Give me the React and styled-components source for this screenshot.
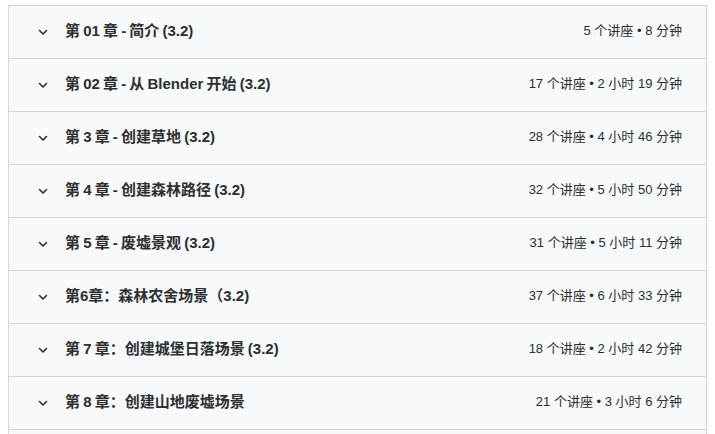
import React from 'react';
import styled, { createGlobalStyle } from 'styled-components';

const GlobalStyle = createGlobalStyle`
  body {
    margin: 0;
    padding: 5px 8px 0 8px;
    background: #ffffff;
    font-family: "Liberation Sans", "Noto Sans CJK SC", sans-serif;
    color: #2d2f31;
    overflow: hidden;
  }
`;

const Curriculum = styled.div`
  display: flex;
  flex-direction: column;
  border: 1px solid #d1d7dc;
  border-bottom: none;
  padding-bottom: 10px;
  background: #f7f9fa;
`;

const Section = styled.div`
  display: flex;
  align-items: center;
  height: 52px;
  padding: 0 24px 0 26px;
  background: #f7f9fa;
  border-bottom: 1px solid #d1d7dc;
`;

const Chevron = styled.span`
  display: flex;
  align-items: center;
  justify-content: center;
  width: 16px;
  height: 16px;
  margin-right: 14px;
  color: #2d2f31;
`;

const Title = styled.div`
  flex: 1;
  font-size: 15px;
  font-weight: 700;
  line-height: 18px;
  word-spacing: -1px;
  white-space: nowrap;
  margin-bottom: 2px;
`;

const Meta = styled.div`
  font-size: 13px;
  line-height: 16px;
  white-space: nowrap;
  margin-bottom: 2px;
`;

const sections = [
  { title: '第 01 章 - 简介 (3.2)', meta: '5 个讲座 • 8 分钟' },
  { title: '第 02 章 - 从 Blender 开始 (3.2)', meta: '17 个讲座 • 2 小时 19 分钟' },
  { title: '第 3 章 - 创建草地 (3.2)', meta: '28 个讲座 • 4 小时 46 分钟' },
  { title: '第 4 章 - 创建森林路径 (3.2)', meta: '32 个讲座 • 5 小时 50 分钟' },
  { title: '第 5 章 - 废墟景观 (3.2)', meta: '31 个讲座 • 5 小时 11 分钟' },
  { title: '第6章：森林农舍场景（3.2)', meta: '37 个讲座 • 6 小时 33 分钟' },
  { title: '第 7 章：创建城堡日落场景 (3.2)', meta: '18 个讲座 • 2 小时 42 分钟' },
  { title: '第 8 章：创建山地废墟场景', meta: '21 个讲座 • 3 小时 6 分钟' },
];

function ChevronDown() {
  return (
    <svg width="12" height="12" viewBox="0 0 24 24" fill="none" stroke="currentColor" strokeWidth="3.2" strokeLinecap="round" strokeLinejoin="round">
      <polyline points="5 9 12 16 19 9" />
    </svg>
  );
}

function App() {
  return (
    <>
      <GlobalStyle />
      <Curriculum>
        {sections.map((s, i) => (
          <Section key={i}>
            <Chevron>
              <ChevronDown />
            </Chevron>
            <Title>{s.title}</Title>
            <Meta>{s.meta}</Meta>
          </Section>
        ))}
      </Curriculum>
    </>
  );
}

export default App;
